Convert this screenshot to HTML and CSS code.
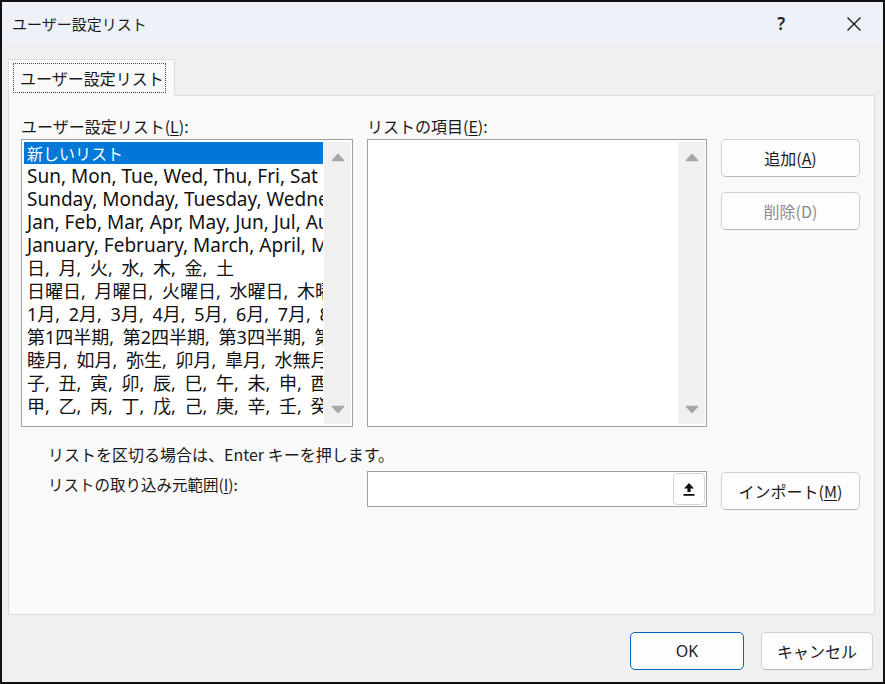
FILE: index.html
```html
<!DOCTYPE html>
<html lang="ja">
<head>
<meta charset="utf-8">
<title>ユーザー設定リスト</title>
<link rel="stylesheet" href="styles.css">
</head>
<body>
<div class="window">
  <div class="titlebar">
    <span class="title">ユーザー設定リスト</span>
    <div class="title-actions">
      <span class="help">?</span>
      <svg class="close" width="16" height="16" viewBox="0 0 16 16"><path d="M1.5 1.5 L14.5 14.5 M14.5 1.5 L1.5 14.5" stroke="#1a1a1a" stroke-width="1.4" fill="none"/></svg>
    </div>
  </div>
  <div class="body">
    <div class="tabs">
      <div class="tab"><span class="focus">ユーザー設定リスト</span></div>
    </div>
    <div class="panel">
      <div class="grid">
        <div class="lbl">ユーザー設定リスト(<u>L</u>):</div>
        <div class="lbl">リストの項目(<u>E</u>):</div>
        <div></div>
        <div class="listbox">
          <div class="items">
            <div class="item selected">新しいリスト</div>
            <div class="item">Sun, Mon, Tue, Wed, Thu, Fri, Sat</div>
            <div class="item">Sunday, Monday, Tuesday, Wednesday, Thursday, Friday, Saturday</div>
            <div class="item">Jan, Feb, Mar, Apr, May, Jun, Jul, Aug, Sep, Oct, Nov, Dec</div>
            <div class="item">January, February, March, April, May, June, July</div>
            <div class="item cjk">日, 月, 火, 水, 木, 金, 土</div>
            <div class="item cjk">日曜日, 月曜日, 火曜日, 水曜日, 木曜日, 金曜日, 土曜日</div>
            <div class="item cjk">1月, 2月, 3月, 4月, 5月, 6月, 7月, 8月, 9月, 10月, 11月, 12月</div>
            <div class="item cjk">第1四半期, 第2四半期, 第3四半期, 第4四半期</div>
            <div class="item cjk">睦月, 如月, 弥生, 卯月, 皐月, 水無月, 文月, 葉月</div>
            <div class="item cjk">子, 丑, 寅, 卯, 辰, 巳, 午, 未, 申, 酉, 戌, 亥</div>
            <div class="item cjk">甲, 乙, 丙, 丁, 戊, 己, 庚, 辛, 壬, 癸</div>
          </div>
          <div class="scrollbar">
            <svg width="14" height="9" viewBox="0 0 14 9"><polygon points="7,1.5 12.5,7.5 1.5,7.5" fill="#a6a6a6" stroke="#a6a6a6" stroke-width="1.5" stroke-linejoin="round"/></svg>
            <svg width="14" height="9" viewBox="0 0 14 9"><polygon points="1.5,1.5 12.5,1.5 7,7.5" fill="#a6a6a6" stroke="#a6a6a6" stroke-width="1.5" stroke-linejoin="round"/></svg>
          </div>
        </div>
        <div class="listbox">
          <div class="items"></div>
          <div class="scrollbar">
            <svg width="14" height="9" viewBox="0 0 14 9"><polygon points="7,1.5 12.5,7.5 1.5,7.5" fill="#a6a6a6" stroke="#a6a6a6" stroke-width="1.5" stroke-linejoin="round"/></svg>
            <svg width="14" height="9" viewBox="0 0 14 9"><polygon points="1.5,1.5 12.5,1.5 7,7.5" fill="#a6a6a6" stroke="#a6a6a6" stroke-width="1.5" stroke-linejoin="round"/></svg>
          </div>
        </div>
        <div class="btncol">
          <button class="btn">追加(<u>A</u>)</button>
          <button class="btn disabled">削除(D)</button>
        </div>
      </div>
      <p class="hint">リストを区切る場合は、Enter キーを押します。</p>
      <div class="import-row">
        <div class="lbl import-lbl">リストの取り込み元範囲(<u>I</u>):</div>
        <div class="input">
          <span class="refbtn">
            <svg width="14" height="16" viewBox="0 0 14 16"><path d="M7 2 L12 7.5 L8.6 7.5 L8.6 11 L5.4 11 L5.4 7.5 L2 7.5 Z" fill="#111"/><rect x="1.5" y="13" width="11" height="1.8" fill="#111"/></svg>
          </span>
        </div>
        <button class="btn import-btn">インポート(<u>M</u>)</button>
      </div>
    </div>
    <div class="footer">
      <button class="btn ok">OK</button>
      <button class="btn cancel">キャンセル</button>
    </div>
  </div>
</div>
</body>
</html>
```
FILE: styles.css
```css
* { box-sizing: border-box; }
html, body { margin: 0; padding: 0; }
body {
  font-family: "Noto Sans", "Noto Sans CJK JP", sans-serif;
  color: #1a1a1a;
  background: #ffffff;
}
.window {
  width: 885px;
  height: 684px;
  border: 2px solid #111;
  display: flex;
  flex-direction: column;
  background: #f0f0f0;
  overflow: hidden;
}
.titlebar {
  height: 43px;
  background: #eef2f8;
  display: flex;
  align-items: center;
  justify-content: space-between;
  padding-left: 10px;
  padding-right: 21px;
}
.title {
  font-size: 15px;
  color: #1a1a1a;
  font-family: "Noto Sans CJK JP", sans-serif;
}
.title-actions {
  display: flex;
  align-items: center;
  gap: 61px;
}
.help {
  font-size: 17px;
  font-weight: 600;
  color: #222;
  font-family: "Noto Sans", sans-serif;
}
.close { display: block; }
.body {
  flex: 1;
  padding: 14px 8px 0 6px;
  display: flex;
  flex-direction: column;
}
.tabs {
  display: flex;
  height: 37px;
  position: relative;
  z-index: 1;
  margin-bottom: -1px;
}
.tab {
  width: 167px;
  height: 37px;
  background: #f9f9f9;
  border: 1px solid #dcdcdc;
  border-bottom: none;
  padding: 3px 8px 3px 4px;
}
.focus {
  display: flex;
  align-items: center;
  height: 30px;
  border: 1px dotted #444;
  padding-left: 6px;
  font-size: 16px;
  font-family: "Noto Sans CJK JP", sans-serif;
}
.panel {
  height: 520px;
  background: #f9f9f9;
  border: 1px solid #dcdcdc;
  padding: 20px 12px 0 12px;
}
.grid {
  display: grid;
  grid-template-columns: 332px 340px 139px;
  grid-template-rows: 20px 288px;
  column-gap: 14px;
  row-gap: 3px;
}
.lbl {
  font-size: 16px;
  line-height: 20px;
  font-family: "Noto Sans CJK JP", sans-serif;
  white-space: nowrap;
}
u { text-underline-offset: 2px; }
.listbox {
  background: #fff;
  border: 1px solid #a0a0a0;
  padding: 2px 1px 2px 2px;
  display: flex;
  gap: 1px;
  overflow: hidden;
}
.items {
  flex: 1;
  min-width: 0;
  overflow: hidden;
}
.item {
  height: 23px;
  line-height: 23px;
  padding-left: 3px;
  font-size: 19px;
  white-space: nowrap;
  overflow: hidden;
  color: #111;
}
.item.cjk {
  font-size: 18px;
  word-spacing: 4px;
}
.item.selected {
  background: #0078d7;
  color: #fff;
  height: 22px;
  line-height: 22px;
  margin-bottom: 1px;
  font-size: 16px;
  font-family: "Noto Sans CJK JP", sans-serif;
}
.scrollbar {
  width: 27px;
  background: #f0f0f0;
  display: flex;
  flex-direction: column;
  justify-content: space-between;
  align-items: center;
  padding: 11px 0 10px;
}
.scrollbar svg { display: block; }
.btncol {
  display: flex;
  flex-direction: column;
  gap: 15px;
}
.btn {
  font-family: "Noto Sans CJK JP", sans-serif;
  font-size: 16px;
  color: #1a1a1a;
  background: #fdfdfd;
  border: 1px solid #d0d0d0;
  border-bottom-color: #b8b8b8;
  border-radius: 5px;
  height: 38px;
  padding: 0;
  display: flex;
  align-items: center;
  justify-content: center;
}
.btn.disabled { color: #8a8a8a; }
.hint {
  margin: 17px 0 0 0;
  padding-left: 27px;
  font-size: 16px;
  line-height: 20px;
  font-family: "Noto Sans CJK JP", sans-serif;
}
.import-row {
  display: grid;
  grid-template-columns: 332px 340px 139px;
  column-gap: 14px;
  margin-top: 7px;
  align-items: start;
}
.import-lbl {
  padding-left: 27px;
  margin-top: 3px;
  font-size: 15.5px;
}
.input {
  height: 36px;
  background: #fff;
  border: 1px solid #a0a0a0;
  display: flex;
  justify-content: flex-end;
  align-items: stretch;
  padding: 1px;
}
.refbtn {
  width: 32px;
  border: 1px solid #d4d4d4;
  border-radius: 4px;
  background: #fff;
  display: flex;
  align-items: center;
  justify-content: center;
}
.import-btn { margin-top: 1px; }
.footer {
  display: flex;
  justify-content: flex-end;
  gap: 17px;
  padding-top: 17px;
  padding-right: 2px;
}
.ok {
  width: 114px;
  border: 1.5px solid #0067c0;
  font-family: "Noto Sans", sans-serif;
}
.cancel { width: 112px; }
```
